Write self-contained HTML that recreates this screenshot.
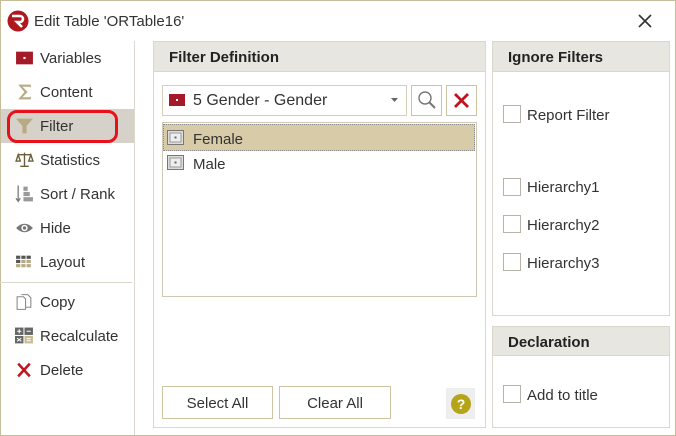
<!DOCTYPE html>
<html><head><style>
*{box-sizing:border-box;margin:0;padding:0}
body{width:676px;height:436px;background:#fff;font-family:"Liberation Sans",sans-serif;font-size:15px;color:#333;position:relative;overflow:hidden}
.abs{position:absolute}
.win{left:0;top:0;width:676px;height:436px;border:1px solid #c8bd9a}
.item{position:absolute;left:15px;height:20px;line-height:20px;font-size:15px;color:#333}
.item .ic{position:absolute;left:0;top:1px;width:19px;height:18px}
.item span.t{position:absolute;left:25px;top:1px;white-space:nowrap}
.panel{position:absolute;border:1px solid #dcd7cb;background:#fff}
.hdr{position:absolute;left:0;top:0;right:0;height:30px;background:#e8e6e1;border-bottom:1px solid #dcd7cb;font-weight:bold;font-size:15px;line-height:32px;padding-left:15px;color:#222}
.cb{position:absolute;width:18px;height:18px;border:1px solid #b8b4aa;background:#fff}
.lbl{position:absolute;font-size:15px;color:#333;white-space:nowrap}
.btn{position:absolute;border:1px solid #cfc4a2;background:#fff;text-align:center;font-size:15px;color:#333}
</style></head><body>
<div class="abs win"></div>
<svg class="abs" style="left:7px;top:10px" width="22" height="22" viewBox="0 0 22 22"><circle cx="11" cy="11" r="10.5" fill="#b01820"/><path d="M5 6h8a3 3 0 0 1 0 6h-3l5 5" stroke="#fff" stroke-width="2.6" fill="none"/></svg>
<div class="lbl" style="left:34px;top:13px">Edit Table 'ORTable16'</div>
<svg class="abs" style="left:637px;top:13px" width="16" height="16"><path d="M2 2L14 14M14 2L2 14" stroke="#333" stroke-width="1.6"/></svg>
<div class="abs" style="left:134px;top:41px;width:1px;height:394px;background:#dcd7cb"></div>
<div class="abs" style="left:0;top:282px;width:132px;height:1px;background:#dcd7cb"></div>
<div class="abs" style="left:1px;top:109px;width:133px;height:34px;background:#d6d2ca"></div>
<div class="abs" style="left:7px;top:110px;width:111px;height:33px;border:3px solid #e8101a;border-radius:10px"></div>
<div class="item" style="top:48px"><svg class="ic" viewBox="0 0 18 16"><rect x="1" y="2" width="16" height="12" fill="#a51a28"/><rect x="8" y="7" width="2" height="2" fill="#fff"/></svg><span class="t">Variables</span></div>
<div class="item" style="top:82px"><svg class="ic" viewBox="0 0 18 16"><path d="M3 1h12v3L14 3H7l5 5-5 5h7l1-1v3H3l6-7z" fill="#b8ab84"/></svg><span class="t">Content</span></div>
<div class="item" style="top:116px"><svg class="ic" viewBox="0 0 18 16"><path d="M1 1h16l-6 7v7h-4V8z" fill="#b8ab84"/></svg><span class="t">Filter</span></div>
<div class="item" style="top:150px"><svg class="ic" viewBox="0 0 18 16"><path d="M9 1v13M3 3h12M3 3l-2 6h4zM15 3l-2 6h4zM5 14h8" stroke="#6b5e3a" stroke-width="1.3" fill="none"/></svg><span class="t">Statistics</span></div>
<div class="item" style="top:184px"><svg class="ic" viewBox="0 0 18 16"><path d="M3 0v14M1 12l2 3 2-3" stroke="#777" stroke-width="1.2" fill="none"/><rect x="8" y="1" width="4" height="4" fill="#999"/><rect x="8" y="6" width="6" height="4" fill="#999"/><rect x="8" y="11" width="9" height="4" fill="#999"/></svg><span class="t">Sort / Rank</span></div>
<div class="item" style="top:218px"><svg class="ic" viewBox="0 0 18 16"><path d="M1 8Q9 0 17 8Q9 16 1 8z" fill="#777"/><circle cx="9" cy="8" r="3" fill="#fff"/><circle cx="9" cy="8" r="1.6" fill="#777"/></svg><span class="t">Hide</span></div>
<div class="item" style="top:252px"><svg class="ic" viewBox="0 0 18 16"><g fill="#555"><rect x="1" y="2" width="4" height="3"/><rect x="6" y="2" width="4" height="3"/><rect x="11" y="2" width="4" height="3"/><rect x="1" y="6" width="4" height="3"/></g><g fill="#b8ab84"><rect x="6" y="6" width="4" height="3"/><rect x="11" y="6" width="4" height="3"/><rect x="1" y="10" width="4" height="3"/><rect x="6" y="10" width="4" height="3"/><rect x="11" y="10" width="4" height="3"/></g></svg><span class="t">Layout</span></div>
<div class="item" style="top:292px"><svg class="ic" viewBox="0 0 18 16"><path d="M2 3h6l2 2v10H2z M6 1h6l3 3v9h-5" stroke="#888" fill="#fff"/></svg><span class="t">Copy</span></div>
<div class="item" style="top:326px"><svg class="ic" viewBox="0 0 18 16"><rect x="0" y="0" width="8" height="7" fill="#666"/><rect x="9" y="0" width="8" height="7" fill="#666"/><rect x="0" y="8" width="8" height="7" fill="#666"/><rect x="9" y="8" width="8" height="7" fill="#c9bb90"/><path d="M2 3.5h4M4 1.5v4M11 3.5h4M2 10l4 3M6 10l-4 3M11 10.5h4M11 12.5h4" stroke="#fff" stroke-width="1"/></svg><span class="t">Recalculate</span></div>
<div class="item" style="top:360px"><svg class="ic" viewBox="0 0 18 16"><path d="M3 2l11 12M14 2L3 14" stroke="#c0141f" stroke-width="2.4"/></svg><span class="t">Delete</span></div>
<div class="panel" style="left:153px;top:41px;width:333px;height:387px">
<div class="hdr">Filter Definition</div>
</div>
<div class="abs" style="left:162px;top:85px;width:245px;height:31px;border:1px solid #d6cfba;background:#fff"></div>
<svg class="abs" style="left:168px;top:92px" width="18" height="16"><rect x="1" y="2" width="16" height="12" fill="#a51a28"/><rect x="8" y="7" width="2" height="2" fill="#fff"/></svg>
<div class="lbl" style="left:193px;top:92px;font-size:16px">5 Gender - Gender</div>
<svg class="abs" style="left:391px;top:98px" width="8" height="5"><path d="M0 0h7L3.5 4z" fill="#666"/></svg>
<div class="btn" style="left:411px;top:85px;width:31px;height:31px"></div>
<svg class="abs" style="left:417px;top:90px" width="20" height="20"><circle cx="8" cy="8" r="6" stroke="#777" stroke-width="1.4" fill="none"/><path d="M12 12l6 6" stroke="#777" stroke-width="2"/></svg>
<div class="btn" style="left:446px;top:85px;width:31px;height:31px"></div>
<svg class="abs" style="left:453px;top:92px" width="17" height="17"><path d="M2 2l13 13M15 2L2 15" stroke="#c0141f" stroke-width="2.8"/></svg>
<div class="abs" style="left:162px;top:122px;width:315px;height:175px;border:1px solid #cfc8b4"></div>
<div class="abs" style="left:163px;top:124px;width:312px;height:27px;background:#d8cba8;border:1px dotted #888"></div>
<svg class="abs" style="left:167px;top:130px" width="17" height="15"><rect x="0.5" y="0.5" width="16" height="14" fill="#ddd" stroke="#777"/><rect x="3" y="3" width="11" height="9" fill="#eee" stroke="#999"/><rect x="7.5" y="6.5" width="2" height="2" fill="#666"/></svg>
<div class="lbl" style="left:193px;top:131px">Female</div>
<svg class="abs" style="left:167px;top:155px" width="17" height="15"><rect x="0.5" y="0.5" width="16" height="14" fill="#ddd" stroke="#777"/><rect x="3" y="3" width="11" height="9" fill="#eee" stroke="#999"/><rect x="7.5" y="6.5" width="2" height="2" fill="#666"/></svg>
<div class="lbl" style="left:193px;top:156px">Male</div>
<div class="btn" style="left:162px;top:386px;width:111px;height:33px;line-height:34px">Select All</div>
<div class="btn" style="left:279px;top:386px;width:112px;height:33px;line-height:34px">Clear All</div>
<div class="abs" style="left:446px;top:388px;width:29px;height:31px;background:#eeeeee"></div>
<svg class="abs" style="left:450px;top:393px" width="22" height="22"><circle cx="11" cy="11" r="10" fill="#b5a318"/><text x="11" y="16" font-family="Liberation Sans" font-weight="bold" font-size="14" fill="#fff" text-anchor="middle">?</text></svg>
<div class="panel" style="left:492px;top:41px;width:178px;height:275px"><div class="hdr">Ignore Filters</div></div>
<div class="cb" style="left:503px;top:105px"></div><div class="lbl" style="left:527px;top:107px">Report Filter</div>
<div class="cb" style="left:503px;top:178px"></div><div class="lbl" style="left:527px;top:179px">Hierarchy1</div>
<div class="cb" style="left:503px;top:215px"></div><div class="lbl" style="left:527px;top:217px">Hierarchy2</div>
<div class="cb" style="left:503px;top:253px"></div><div class="lbl" style="left:527px;top:255px">Hierarchy3</div>
<div class="panel" style="left:492px;top:326px;width:178px;height:102px"><div class="hdr" style="height:29px;line-height:31px">Declaration</div></div>
<div class="cb" style="left:503px;top:385px"></div><div class="lbl" style="left:527px;top:387px">Add to title</div>
</body></html>
